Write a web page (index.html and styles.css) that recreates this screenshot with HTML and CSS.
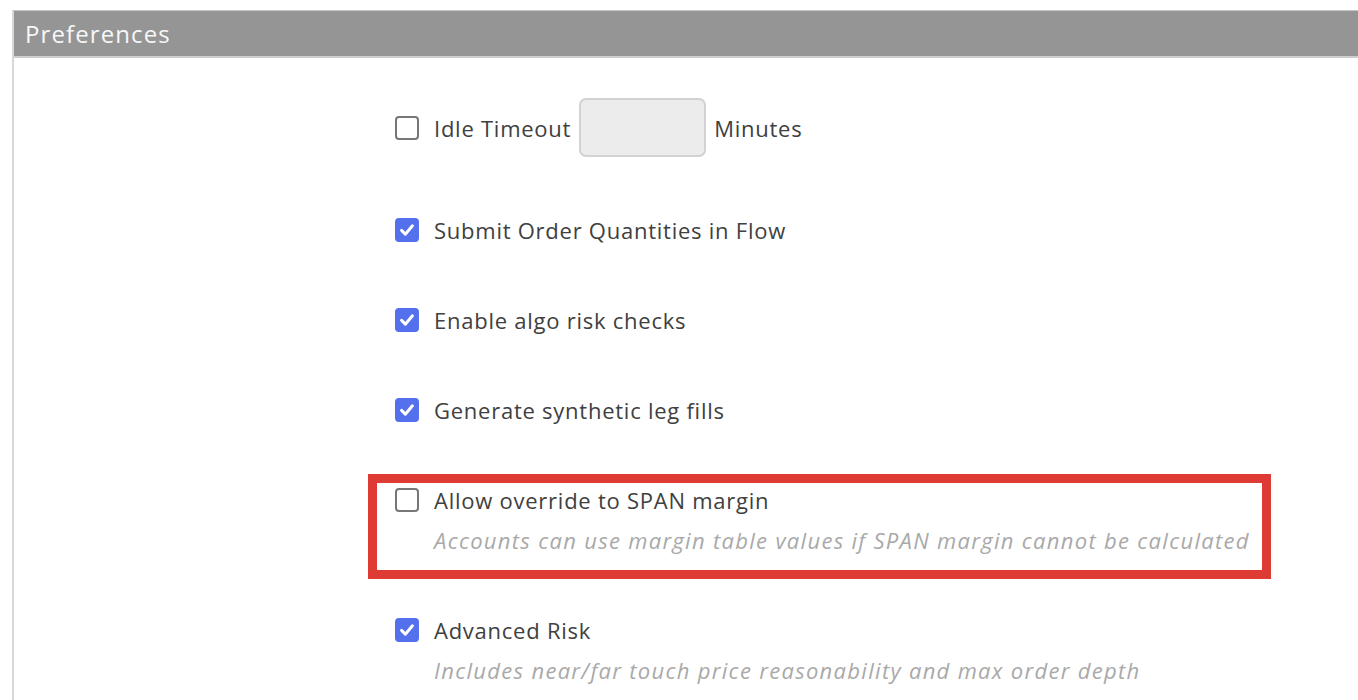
FILE: index.html
```html
<!DOCTYPE html>
<html>
<head>
<meta charset="utf-8">
<link rel="stylesheet" href="styles.css">
</head>
<body>
<div class="panel">
  <div class="panel-header">Preferences</div>
  <div class="panel-body">
    <div class="item item-idle">
      <div class="row">
        <span class="cb"></span>
        <span class="label">Idle Timeout</span>
        <span class="input"></span>
        <span class="label">Minutes</span>
      </div>
    </div>
    <div class="item">
      <div class="row">
        <span class="cb checked"><svg viewBox="0 0 24 24"><path d="M5.5 12.5l4.5 4.5 8.5-10"/></svg></span>
        <span class="label">Submit Order Quantities in Flow</span>
      </div>
    </div>
    <div class="item">
      <div class="row">
        <span class="cb checked"><svg viewBox="0 0 24 24"><path d="M5.5 12.5l4.5 4.5 8.5-10"/></svg></span>
        <span class="label">Enable algo risk checks</span>
      </div>
    </div>
    <div class="item">
      <div class="row">
        <span class="cb checked"><svg viewBox="0 0 24 24"><path d="M5.5 12.5l4.5 4.5 8.5-10"/></svg></span>
        <span class="label">Generate synthetic leg fills</span>
      </div>
    </div>
    <div class="item highlight">
      <div class="row">
        <span class="cb"></span>
        <span class="label">Allow override to SPAN margin</span>
      </div>
      <div class="desc">Accounts can use margin table values if SPAN margin cannot be calculated</div>
    </div>
    <div class="item">
      <div class="row">
        <span class="cb checked"><svg viewBox="0 0 24 24"><path d="M5.5 12.5l4.5 4.5 8.5-10"/></svg></span>
        <span class="label">Advanced Risk</span>
      </div>
      <div class="desc">Includes near/far touch price reasonability and max order depth</div>
    </div>
  </div>
</div>
</body>
</html>
```
FILE: styles.css
```css
html, body {
  margin: 0;
  padding: 0;
  background: #ffffff;
  overflow: hidden;
}
body {
  font-family: "Open Sans", "Liberation Sans", sans-serif;
  color: #3a3a3a;
}
.panel {
  margin: 10px 0 0 12px;
  border-left: 2px solid #d8d8d8;
  border-top: 1px solid #c6c6c6;
  height: 700px;
}
.panel-header {
  background: #959595;
  height: 45px;
  border-bottom: 2px solid #cdcdcd;
  color: #f7f7f7;
  font-size: 24px;
  line-height: 46px;
  padding-left: 11px;
  letter-spacing: 1.1px;
}
.panel-body {
  padding: 27px 0 0 354px;
  display: flex;
  flex-direction: column;
  align-items: flex-start;
  gap: 25px;
}
.item {
  border: 9px solid transparent;
  padding: 4px 12px 17px 18px;
}
.item-idle {
  padding-bottom: 13px;
}
.highlight {
  border-color: #df3b35;
}
.row {
  display: flex;
  align-items: center;
  gap: 8px;
  min-height: 26px;
}
.cb {
  box-sizing: border-box;
  width: 24px;
  height: 24px;
  border: 2px solid #777777;
  border-radius: 4px;
  margin-right: 7px;
  display: flex;
  align-items: center;
  justify-content: center;
  flex: none;
}
.cb.checked {
  background: #5470ec;
  border-color: #5470ec;
}
.cb svg {
  width: 22px;
  height: 22px;
  fill: none;
  stroke: #ffffff;
  stroke-width: 3.6;
  stroke-linecap: round;
  stroke-linejoin: round;
}
.label {
  font-size: 22px;
  line-height: 26px;
  color: #404040;
  letter-spacing: 0.75px;
}
.input {
  box-sizing: border-box;
  width: 127px;
  height: 59px;
  background: #ececec;
  border: 2px solid #d2d2d2;
  border-radius: 7px;
}
.desc {
  margin-top: 14px;
  padding-left: 39px;
  font-size: 22px;
  line-height: 26px;
  font-style: italic;
  color: #a9a9a9;
  letter-spacing: 1.3px;
}
```
